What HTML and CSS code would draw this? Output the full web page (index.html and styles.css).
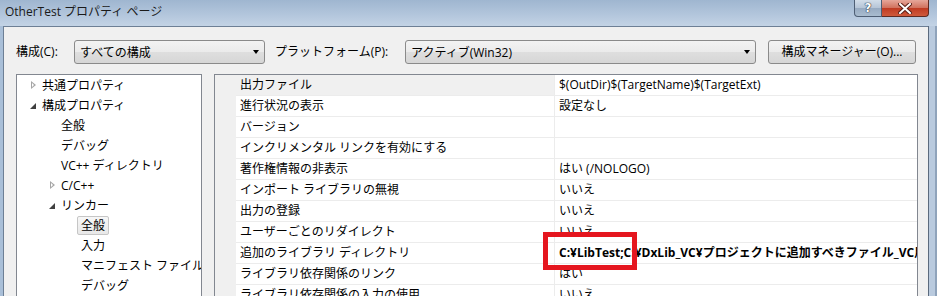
FILE: index.html
```html
<!DOCTYPE html>
<html lang="ja">
<head>
    <meta charset="UTF-8">
    <title>OtherTest プロパティ ページ</title>
    <link rel="stylesheet" href="styles.css">
</head>
<body>

    <div class="window">
        <div class="titlebar">
            <span class="title">OtherTest プロパティ ページ</span>
            <div class="caption-buttons">
                <div class="cap-btn help">?</div>
                <div class="cap-btn close">
                    <svg width="14" height="11" viewBox="0 0 14 11">
                        <path d="M2 1 L12 10 M12 1 L2 10" stroke="#5a2018" stroke-width="4" stroke-linecap="square"/>
                        <path d="M2 1 L12 10 M12 1 L2 10" stroke="#ffffff" stroke-width="2" stroke-linecap="square"/>
                    </svg>
                </div>
            </div>
        </div>

        <div class="client">
            <div class="frame-left"></div>
            <div class="content">
                <div class="toolbar">
                    <span class="field-label config-label">構成(C):</span>
                    <div class="combo config-combo">
                        <span>すべての構成</span>
                        <span class="arrow"></span>
                    </div>
                    <span class="field-label platform-label">プラットフォーム(P):</span>
                    <div class="combo platform-combo">
                        <span>アクティブ(Win32)</span>
                        <span class="arrow"></span>
                    </div>
                    <div class="btn">構成マネージャー(O)...</div>
                </div>

                <div class="panes">
                    <div class="tree">
                        <div class="item lvl0"><span class="twisty closed"></span><span class="label">共通プロパティ</span></div>
                        <div class="item lvl0"><span class="twisty open"></span><span class="label">構成プロパティ</span></div>
                        <div class="item lvl1"><span class="twisty"></span><span class="label">全般</span></div>
                        <div class="item lvl1"><span class="twisty"></span><span class="label">デバッグ</span></div>
                        <div class="item lvl1"><span class="twisty"></span><span class="label">VC++ ディレクトリ</span></div>
                        <div class="item lvl1"><span class="twisty closed"></span><span class="label">C/C++</span></div>
                        <div class="item lvl1"><span class="twisty open"></span><span class="label">リンカー</span></div>
                        <div class="item lvl2"><span class="twisty"></span><span class="label selected">全般</span></div>
                        <div class="item lvl2"><span class="twisty"></span><span class="label">入力</span></div>
                        <div class="item lvl2"><span class="twisty"></span><span class="label">マニフェスト ファイル</span></div>
                        <div class="item lvl2"><span class="twisty"></span><span class="label">デバッグ</span></div>
                    </div>

                    <div class="grid">
                        <div class="gutter"></div>
                        <div class="rows">
                            <div class="row first"><div class="name">出力ファイル</div><div class="value">$(OutDir)$(TargetName)$(TargetExt)</div></div>
                            <div class="row"><div class="name">進行状況の表示</div><div class="value">設定なし</div></div>
                            <div class="row"><div class="name">バージョン</div><div class="value"></div></div>
                            <div class="row"><div class="name">インクリメンタル リンクを有効にする</div><div class="value"></div></div>
                            <div class="row"><div class="name">著作権情報の非表示</div><div class="value">はい (/NOLOGO)</div></div>
                            <div class="row"><div class="name">インポート ライブラリの無視</div><div class="value">いいえ</div></div>
                            <div class="row"><div class="name">出力の登録</div><div class="value">いいえ</div></div>
                            <div class="row"><div class="name">ユーザーごとのリダイレクト</div><div class="value">いいえ</div></div>
                            <div class="row"><div class="name">追加のライブラリ ディレクトリ</div><div class="value bold">C:¥LibTest;C:¥DxLib_VC¥プロジェクトに追加すべきファイル_VC用;%(AdditionalLibraryDirectories)</div></div>
                            <div class="row"><div class="name">ライブラリ依存関係のリンク</div><div class="value">はい</div></div>
                            <div class="row"><div class="name">ライブラリ依存関係の入力の使用</div><div class="value">いいえ</div></div>
                        </div>
                    </div>
                </div>
            </div>
            <div class="frame-right"></div>
        </div>

        <!-- annotation drawn over the screenshot -->
        <div class="red-box"></div>
    </div>

</body>
</html>
```

FILE: styles.css
```css
body {
    margin: 0;
    padding: 0;
    font-family: "Open Sans", "Noto Sans CJK JP", sans-serif;
    font-size: 12px;
    color: #000000;
    overflow: hidden;
}

.window {
    position: relative;
    width: 937px;
    height: 296px;
    overflow: hidden;
    display: flex;
    flex-direction: column;
    background: linear-gradient(90deg, #a9bfd8 0%, #b3c6dc 30%, #a3bad3 60%, #b6c9de 100%);
}

/* title bar */
.titlebar {
    height: 26px;
    flex: none;
    display: flex;
    align-items: flex-start;
    background: linear-gradient(180deg, #9fb6d0 0%, #b4c7dd 60%, #c3d3e5 100%);
}

.title {
    padding-left: 5px;
    line-height: 24px;
    font-size: 12px;
    color: #1a1a1a;
}

.caption-buttons {
    margin-left: auto;
    margin-right: 8px;
    display: flex;
}

.cap-btn {
    height: 17px;
    display: flex;
    align-items: center;
    justify-content: center;
    box-sizing: border-box;
    border: 1px solid #4e5e74;
    border-top: none;
}

.help {
    width: 28px;
    border-radius: 0 0 0 4px;
    background: linear-gradient(180deg, #d2dde9 0%, #b5c4d6 50%, #97aac1 51%, #a9bccf 100%);
    color: #ffffff;
    font-family: "DejaVu Sans", sans-serif;
    font-weight: bold;
    font-size: 12px;
    text-shadow: 0 0 1px #2a3445, 0 0 1px #2a3445, 0 0 1px #2a3445;
}

.close {
    width: 47px;
    border-left: none;
    border-color: #5e2a22;
    border-radius: 0 0 4px 0;
    background: linear-gradient(180deg, #e6a79a 0%, #d0705c 50%, #bf3a22 51%, #cf5a3c 100%);
}

/* client area */
.client {
    flex: 1;
    display: flex;
}

.frame-left {
    width: 3px;
    border-right: 1px solid #6d7f95;
}

.frame-right {
    width: 6px;
    border-left: 1px solid #5b6a7d;
    border-right: 2px solid #8fa3bb;
    background: #b9cade;
}

.content {
    flex: 1;
    background-color: #f0f0f0;
    display: flex;
    flex-direction: column;
    border-top: 1px solid #6d7f95;
}

.toolbar {
    display: flex;
    align-items: center;
    padding: 13px 0 10px 12px;
}

.field-label {
    line-height: 24px;
}

.config-label {
    width: 58px;
}

.platform-label {
    width: 130px;
    margin-left: 10px;
}

.combo, .btn {
    height: 24px;
    box-sizing: border-box;
    border: 1px solid #8a8a8a;
    border-radius: 3px;
    background: linear-gradient(180deg, #f3f3f3 0%, #ebebeb 48%, #dedede 52%, #d6d6d6 100%);
    line-height: 21px;
}

.combo {
    display: flex;
    align-items: center;
    padding-left: 5px;
}

.config-combo {
    width: 191px;
}

.platform-combo {
    width: 351px;
}

.arrow {
    margin-left: auto;
    margin-right: 5px;
    width: 0;
    height: 0;
    border-left: 3.5px solid transparent;
    border-right: 3.5px solid transparent;
    border-top: 4px solid #000000;
}

.btn {
    width: 148px;
    margin-left: 12px;
    text-align: center;
}

/* panes */
.panes {
    flex: 1;
    display: flex;
    gap: 12px;
    padding-left: 12px;
    min-height: 0;
}

.tree {
    width: 186px;
    box-sizing: border-box;
    border: 1px solid #828790;
    border-bottom: none;
    background: #ffffff;
    overflow: hidden;
}

.item {
    height: 20px;
    display: flex;
    align-items: center;
    white-space: nowrap;
}

.lvl0 { padding-left: 13px; }
.lvl1 { padding-left: 32px; }
.lvl2 { padding-left: 52px; }

.twisty {
    width: 12px;
    flex: none;
    height: 9px;
    position: relative;
}

.twisty.closed::before {
    content: "";
    position: absolute;
    left: 1px;
    top: 0;
    border-top: 4.5px solid transparent;
    border-bottom: 4.5px solid transparent;
    border-left: 5px solid #a6a6a6;
}

.twisty.closed::after {
    content: "";
    position: absolute;
    left: 2px;
    top: 2px;
    border-top: 2.5px solid transparent;
    border-bottom: 2.5px solid transparent;
    border-left: 2.8px solid #ffffff;
}

.twisty.open::before {
    content: "";
    position: absolute;
    left: 0;
    top: 2px;
    border-left: 6px solid transparent;
    border-bottom: 6px solid #404040;
}

.label {
    margin-left: -4px;
    padding: 0 3px;
    border: 1px solid transparent;
    border-radius: 2px;
    line-height: 17px;
}

.label.selected {
    border-color: #c6c6c6;
    background: linear-gradient(180deg, #f7f7f7 0%, #e8e8e8 100%);
}

/* property grid */
.grid {
    width: 704px;
    box-sizing: border-box;
    border: 1px solid #828790;
    border-bottom: none;
    display: flex;
    background: #f0f0f0;
}

.gutter {
    width: 21px;
    flex: none;
}

.rows {
    flex: 1;
    min-width: 0;
    background: #ffffff;
}

.row {
    height: 21px;
    box-sizing: border-box;
    border-bottom: 1px solid #ececec;
    display: flex;
}

.name, .value {
    padding-left: 4px;
    line-height: 20px;
    white-space: nowrap;
    overflow: hidden;
}

.name {
    width: 314px;
    flex: none;
    border-right: 1px solid #ececec;
}

.value {
    flex: 1;
}

.row.first .name {
    background: #f0f0f0;
}

.value.bold {
    font-weight: bold;
}

.red-box {
    position: absolute;
    left: 543px;
    top: 232px;
    width: 94px;
    height: 38px;
    box-sizing: border-box;
    border: 5px solid #e5161f;
}
```
